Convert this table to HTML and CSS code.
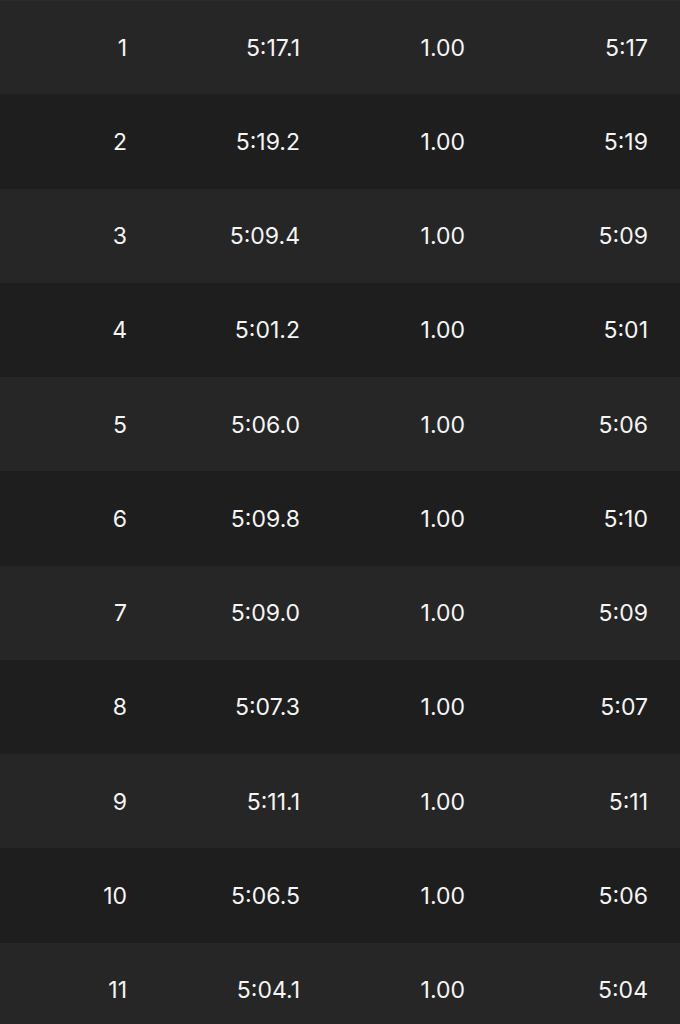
FILE: index.html
```html
<!DOCTYPE html>
<html lang="en">
<head>
<meta charset="utf-8">
<title>Splits</title>
<link rel="stylesheet" href="styles.css">
</head>
<body>
<div class="splits">
  <div class="row odd first"><span class="c1">1</span><span class="c2">5:17.1</span><span class="c3">1.00</span><span class="c4">5:17</span></div>
  <div class="row even"><span class="c1">2</span><span class="c2">5:19.2</span><span class="c3">1.00</span><span class="c4">5:19</span></div>
  <div class="row odd"><span class="c1">3</span><span class="c2">5:09.4</span><span class="c3">1.00</span><span class="c4">5:09</span></div>
  <div class="row even"><span class="c1">4</span><span class="c2">5:01.2</span><span class="c3">1.00</span><span class="c4">5:01</span></div>
  <div class="row odd"><span class="c1">5</span><span class="c2">5:06.0</span><span class="c3">1.00</span><span class="c4">5:06</span></div>
  <div class="row even"><span class="c1">6</span><span class="c2">5:09.8</span><span class="c3">1.00</span><span class="c4">5:10</span></div>
  <div class="row odd"><span class="c1">7</span><span class="c2">5:09.0</span><span class="c3">1.00</span><span class="c4">5:09</span></div>
  <div class="row even"><span class="c1">8</span><span class="c2">5:07.3</span><span class="c3">1.00</span><span class="c4">5:07</span></div>
  <div class="row odd"><span class="c1">9</span><span class="c2">5:11.1</span><span class="c3">1.00</span><span class="c4">5:11</span></div>
  <div class="row even"><span class="c1">10</span><span class="c2">5:06.5</span><span class="c3">1.00</span><span class="c4">5:06</span></div>
  <div class="row odd"><span class="c1">11</span><span class="c2">5:04.1</span><span class="c3">1.00</span><span class="c4">5:04</span></div>
</div>
</body>
</html>
```

FILE: styles.css
```css
html, body {
  margin: 0;
  padding: 0;
  background: #1e1e1e;
}
body {
  font-family: Inter, "Liberation Sans", sans-serif;
  color: #f5f5f5;
  font-size: 23px;
  overflow: hidden;
  height: 1024px;
}
.splits {
  display: flex;
  flex-direction: column;
}
.row {
  display: grid;
  grid-template-columns: 127px 173px 165px 183px;
  align-items: center;
  height: 94.25px;
  flex: none;
}
.row span {
  text-align: right;
  line-height: 1;
  padding-top: 2px;
}
.odd { background: #262626; }
.even { background: #1e1e1e; }
.first { box-shadow: inset 0 1px 0 #2c2c2c; }
```
